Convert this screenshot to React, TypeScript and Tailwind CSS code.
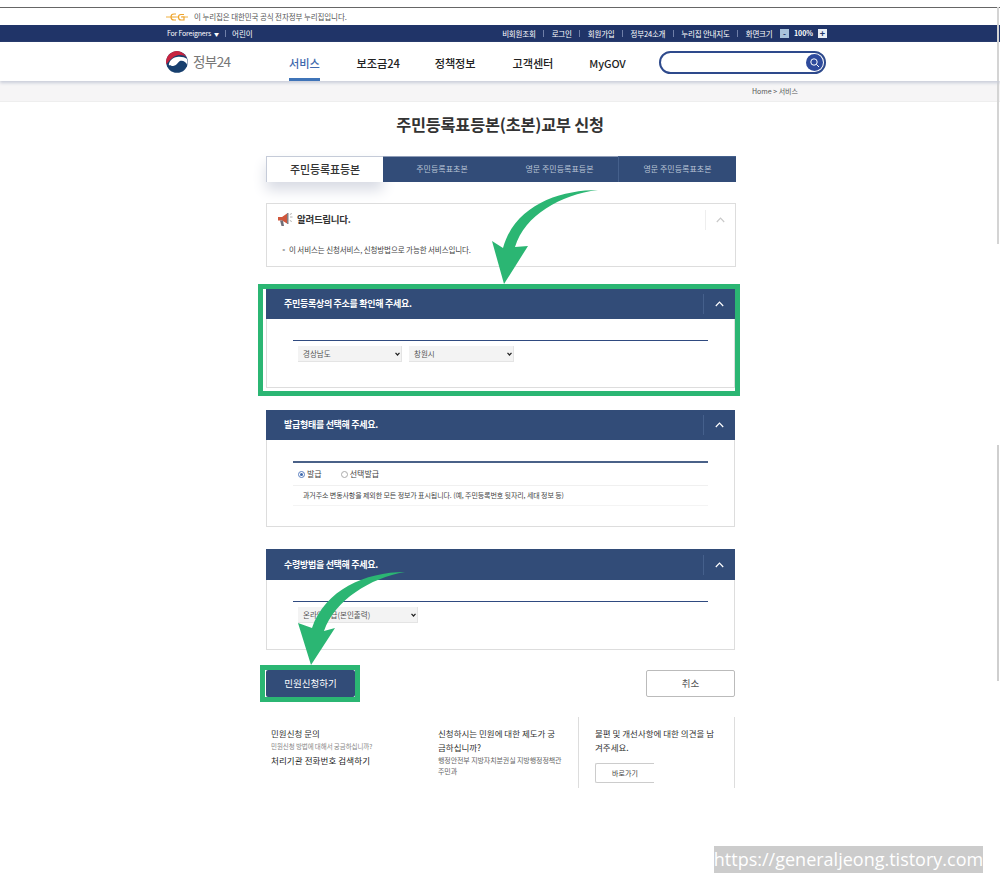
import React from "react";

const font = { fontFamily: '"Noto Sans CJK KR", "Noto Sans", sans-serif' };

function Chevron({ color }: { color: string }) {
  return (
    <svg width="9" height="6" viewBox="0 0 9 6" fill="none">
      <path d="M0.8 5 L4.5 1.2 L8.2 5" stroke={color} strokeWidth="1.2" />
    </svg>
  );
}

function Section({
  title,
  headClass,
  bodyClass,
  children,
}: {
  title: string;
  headClass: string;
  bodyClass: string;
  children: React.ReactNode;
}) {
  return (
    <section className="w-[469px] border-x border-b border-[#dddddd]">
      <div className={headClass}>
        <h2 className="text-[9px] font-bold tracking-[-0.3px] text-white">{title}</h2>
        <div className="flex h-[20px] w-[32px] items-center justify-center border-l border-[#45608c]">
          <Chevron color="#ffffff" />
        </div>
      </div>
      <div className={bodyClass}>{children}</div>
    </section>
  );
}

function NativeSelect({ width, label }: { width: string; label: string }) {
  return (
    <div className={`relative h-[16px] ${width}`}>
      <select className="block h-[16px] w-full appearance-none border-b border-r border-[#e4e4e4] bg-[#f3f3f3] pl-[5px] text-[7.5px] text-[#555555]">
        <option>{label}</option>
      </select>
      <svg className="absolute right-[2px] top-[6px]" width="5" height="4" viewBox="0 0 5 4" fill="none">
        <path d="M0.5 0.8 L2.5 3 L4.5 0.8" stroke="#222222" strokeWidth="1.2" />
      </svg>
    </div>
  );
}

function TopLink({ children }: { children: React.ReactNode }) {
  return <span className="text-[7.5px] tracking-[-0.2px] text-white">{children}</span>;
}

const Sep = () => <span className="h-[7px] w-px bg-[#6f7fa8]" />;

export default function App() {
  return (
    <div style={font} className="relative h-[890px] w-[1000px] overflow-hidden bg-white text-[#333333]">
      <div className="h-[7px]" />
      {/* gov banner */}
      <div className="h-[18px] border-t border-[#666666]">
        <div className="ml-[166px] flex h-[17px] items-center gap-[5px]">
          <svg width="23" height="8" viewBox="0 0 23 8" fill="none">
            <path d="M0 4 H22" stroke="#f0b040" strokeWidth="1" />
            <path d="M10 1 H8 Q5 1 5 4 Q5 7 8 7 H10" stroke="#eea42c" strokeWidth="1.2" fill="#ffffff" />
            <path d="M18 1.5 H15 Q12.5 1.5 12.5 4 Q12.5 7 15 7 H18 V4 H15" stroke="#eea42c" strokeWidth="1.2" fill="#ffffff" />
            <path d="M5 4 H10" stroke="#eea42c" strokeWidth="1" />
          </svg>
          <span className="text-[7.5px] tracking-[-0.1px] text-[#555555]">이 누리집은 대한민국 공식 전자정부 누리집입니다.</span>
        </div>
      </div>
      {/* utility bar */}
      <div className="flex h-[17px] items-center bg-[#203468] pl-[167px] pr-[173px]">
        <span className="text-[7px] tracking-[-0.2px] text-white">For Foreigners</span>
        <span className="ml-[3px] text-[5px] text-white">▼</span>
        <span className="ml-[6px] h-[7px] w-px bg-[#6f7fa8]" />
        <span className="ml-[6px] text-[7.5px] text-white">어린이</span>
        <div className="ml-auto flex items-center gap-[7.5px]">
          <TopLink>비회원조회</TopLink>
          <Sep />
          <TopLink>로그인</TopLink>
          <Sep />
          <TopLink>회원가입</TopLink>
          <Sep />
          <TopLink>정부24소개</TopLink>
          <Sep />
          <TopLink>누리집 안내지도</TopLink>
          <Sep />
          <TopLink>화면크기</TopLink>
          <div className="flex items-center">
            <span className="flex h-[9px] w-[9px] items-center justify-center bg-[#a9c3dc] text-[8px] font-bold leading-none text-[#203468]">-</span>
            <span className="w-[29px] text-center text-[7px] font-bold text-white">100%</span>
            <span className="flex h-[9px] w-[9px] items-center justify-center bg-[#e8edf4] text-[9px] font-bold leading-none text-[#203468]">+</span>
          </div>
        </div>
      </div>
      {/* main nav */}
      <div className="relative z-10 flex h-[39px] items-center pl-[166px] shadow-[0_2px_3px_#c9cdd9]">
        <div className="flex w-[123px] items-center gap-[5px]">
          <svg width="22" height="22" viewBox="0 0 22 22">
            <circle cx="11" cy="11" r="10.8" fill="#173f6e" />
            <path d="M0.4 13.5 A10.8 10.8 0 0 1 20.6 6.2 C17.5 3.4 12 3 8 5.8 C4.6 8 2.6 10.5 0.4 13.5 Z" fill="#c8233f" />
            <path d="M2.8 13.8 C3.4 9.4 7 6.6 11 6 C15 5.4 19 6.4 20.8 7.8 C21.6 10 21.7 12 21.2 14 C20.2 10.4 16 8.8 13.5 10.2 C11.5 11.5 11 14 8 14.8 C6 15.2 4 15 2.8 13.8 Z" fill="#ffffff" />
          </svg>
          <span className="text-[13.5px] tracking-[-0.6px] text-[#777777]">정부24</span>
        </div>
        <div className="relative flex h-full items-center">
          <span className="mt-[4px] text-[11.2px] font-medium tracking-[-0.1px] text-[#3f69ad]">서비스</span>
          <span className="absolute bottom-0 left-0 h-[3px] w-[31px] bg-[#3f74b8]" />
        </div>
        <span className="ml-[37px] mt-[4px] text-[11.2px] font-medium tracking-[-0.1px] text-[#222222]">보조금24</span>
        <span className="ml-[35px] mt-[4px] text-[11.2px] font-medium tracking-[-0.1px] text-[#222222]">정책정보</span>
        <span className="ml-[37px] mt-[4px] text-[11.2px] font-medium tracking-[-0.1px] text-[#222222]">고객센터</span>
        <span className="ml-[36px] mt-[4px] text-[10.8px] font-medium tracking-[-0.1px] text-[#222222]">MyGOV</span>
        <div className="ml-[33px] mt-[2px] flex h-[23px] w-[167px] items-center justify-end rounded-full border-2 border-[#2e4a8c] pr-[1px]">
          <span className="flex h-[17px] w-[17px] items-center justify-center rounded-full bg-[#2e4a9c]">
            <svg width="11" height="11" viewBox="0 0 11 11" fill="none">
              <circle cx="5" cy="5" r="3.2" stroke="#ffffff" strokeWidth="1" />
              <path d="M7.4 7.4 L10 10" stroke="#ffffff" strokeWidth="1" />
            </svg>
          </span>
        </div>
      </div>
      {/* breadcrumb */}
      <div className="flex h-[21px] items-center justify-end border-b border-[#eeeeee] bg-[#f6f5f6] pr-[202px]">
        <span className="text-[7px] text-[#555555]">Home &gt; 서비스</span>
      </div>

      <h1 className="mt-[10px] text-center text-[16.3px] font-bold leading-[24px] tracking-[-0.2px] text-[#333333]">
        주민등록표등본(초본)교부 신청
      </h1>

      <div className="ml-[266px] mt-[20px] w-[470px]">
        {/* tabs */}
        <div className="flex h-[26px]">
          <div className="flex w-[117px] items-center justify-center border-l border-t border-[#c5cbd8] bg-white pb-[1px] text-[11px] font-medium tracking-[-0.1px] text-[#333333] shadow-[0_8px_14px_#d8dbe4]">
            주민등록표등본
          </div>
          <div className="relative flex w-[118px] items-center justify-center border-t border-[#8f9db8] bg-[#324c78] pb-[1px] text-[8px] text-[#b9c4d6]">주민등록표초본</div>
          <div className="relative flex w-[117px] items-center justify-center border-t border-[#8f9db8] bg-[#324c78] pb-[1px] text-[8px] text-[#b9c4d6]">영문 주민등록표등본</div>
          <div className="relative flex w-[118px] items-center justify-center border-l border-t border-[#45608c] bg-[#324c78] pb-[1px] text-[8px] text-[#b9c4d6]">영문 주민등록표초본</div>
        </div>

        {/* notice */}
        <div className="mt-[21px] h-[64px] border border-[#dddddd]">
          <div className="flex h-[31px] items-center justify-between pl-[10px]">
            <div className="flex items-center gap-[4px]">
              <svg width="16" height="15" viewBox="0 0 16 15">
                <path d="M1 5 H5 L10 1.5 V11.5 L5 8.5 H1 Z" fill="#d0573c" />
                <path d="M3 8.5 H6 L7 14 H4.5 Z" fill="#6e6e78" />
                <path d="M10 1 H11.5 V12 H10 Z" fill="#808088" />
                <path d="M13 5 H15.5 M12.8 2.5 L14.8 1.5 M12.8 8.5 L14.8 9.5" stroke="#999999" strokeWidth="0.8" />
              </svg>
              <span className="text-[9.5px] font-bold tracking-[-0.3px] text-[#333333]">알려드립니다.</span>
            </div>
            <div className="flex h-[20px] w-[30px] items-center justify-center border-l border-[#eeeeee]">
              <Chevron color="#c9c9c9" />
            </div>
          </div>
          <p className="ml-[13px] mt-[9px] text-[7.5px] tracking-[-0.1px] text-[#444444]">
            <span className="text-[#aaaaaa]">▪</span> 이 서비스는 신청서비스, 신청방법으로 가능한 서비스입니다.
          </p>
        </div>

        {/* address */}
        <div className="mt-[22px]">
          <Section
            title="주민등록상의 주소를 확인해 주세요."
            headClass="-mx-px flex h-[30px] items-center justify-between bg-[#324c78] pl-[18px]"
            bodyClass="h-[68px] px-[26px] pt-[21px]"
          >
            <div className="border-t border-[#2f4a80] pl-[5px] pt-[5px]">
              <div className="flex gap-[7px]">
                <NativeSelect width="w-[104px]" label="경상남도" />
                <NativeSelect width="w-[105px]" label="창원시" />
              </div>
            </div>
          </Section>
        </div>

        {/* form */}
        <div className="mt-[22px]">
          <Section
            title="발급형태를 선택해 주세요."
            headClass="-mx-px flex h-[30px] items-center justify-between bg-[#324c78] pl-[18px]"
            bodyClass="h-[86px] px-[26px] pt-[21px]"
          >
            <div className="border-t-2 border-[#4a6188]">
              <div className="flex h-[23px] items-center border-b border-[#f0f0f0] pl-[5px] text-[8px] text-[#444444]">
                <span className="flex h-[7px] w-[7px] items-center justify-center rounded-full border border-[#5a7fc0]">
                  <span className="h-[3px] w-[3px] rounded-full bg-[#3f69ad]" />
                </span>
                <span className="ml-[2px]">발급</span>
                <span className="ml-[19px] h-[7px] w-[7px] rounded-full border border-[#aaaaaa]" />
                <span className="ml-[2px]">선택발급</span>
              </div>
              <p className="flex h-[20px] items-center border-b border-[#f4f4f4] pl-[10px] text-[7px] tracking-[-0.1px] text-[#444444]">
                과거주소 변동사항을 제외한 모든 정보가 표시됩니다. (예, 주민등록번호 뒷자리, 세대 정보 등)
              </p>
            </div>
          </Section>
        </div>

        {/* receive */}
        <div className="mt-[22px]">
          <Section
            title="수령방법을 선택해 주세요."
            headClass="-mx-px flex h-[31px] items-center justify-between bg-[#324c78] pl-[18px]"
            bodyClass="h-[69px] px-[26px] pt-[21px]"
          >
            <div className="border-t border-[#2f4a80] pl-[5px] pt-[5px]">
              <NativeSelect width="w-[120px]" label="온라인발급(본인출력)" />
            </div>
          </Section>
        </div>

        {/* buttons */}
        <div className="mt-[20px] flex w-[469px] justify-between">
          <button className="h-[27px] w-[89px] rounded-[2px] bg-[#324c78] text-[9.5px] text-white">민원신청하기</button>
          <button className="h-[27px] w-[89px] rounded-[2px] border border-[#bbbbbb] bg-white text-[9.5px] text-[#555555]">취소</button>
        </div>

        {/* info */}
        <div className="mt-[20px] flex h-[71px] w-[469px]">
          <div className="w-[172px] pl-[5px] pt-[9px]">
            <p className="text-[8.5px] leading-[14px] text-[#333333]">민원신청 문의</p>
            <p className="text-[6.5px] leading-[13px] tracking-[-0.1px] text-[#888888]">민원신청 방법에 대해서 궁금하십니까?</p>
            <p className="text-[8.5px] leading-[14px] tracking-[0.1px] text-[#222222]">처리기관 전화번호 검색하기</p>
          </div>
          <div className="w-[140px] pr-[14px] pt-[9px]">
            <p className="w-[122px] break-all text-[8.5px] leading-[14px] text-[#333333]">신청하시는 민원에 대한 제도가 궁금하십니까?</p>
            <p className="mt-[1px] text-[7px] leading-[11px] tracking-[-0.1px] text-[#666666]">행정안전부 지방자치분권실 지방행정정책관 주민과</p>
          </div>
          <div className="w-[157px] border-x border-[#dddddd] pl-[16px] pt-[9px]">
            <p className="w-[124px] break-all text-[8.5px] leading-[14px] text-[#333333]">불편 및 개선사항에 대한 의견을 남겨주세요.</p>
            <button className="mt-[9px] h-[20px] w-[59px] rounded-l-[2px] border-y border-l border-[#cccccc] text-[7px] text-[#444444]">바로가기</button>
          </div>
        </div>
      </div>

      {/* annotations laid over the page */}
      <div className="absolute left-[258px] top-[284px] h-[112px] w-[482px] border-[5px] border-[#2bb673]" />
      <div className="absolute left-[260px] top-[665px] h-[37px] w-[100px] border-[5px] border-[#2bb673]" />
      <svg className="absolute left-0 top-0" width="1000" height="890" viewBox="0 0 1000 890">
        <path d="M598 190 C560 190 515 205 503 248 L492 241 L504 284 L528 246 L515 247 C525 215 560 195 598 190 Z" fill="#2bb673" />
        <path d="M405 572 C365 572 325 590 312 628 L298 623 L311 665 L335 628 L324 631 C335 600 370 578 405 572 Z" fill="#2bb673" />
      </svg>

      {/* scrollbar traces */}
      <div className="absolute left-[997px] top-[7px] h-[237px] w-[2px] bg-[#d4d4d4]" />
      <div className="absolute left-[997px] top-[445px] h-[236px] w-[2px] bg-[#cfcfcf]" />

      {/* watermark */}
      <div
        style={{ fontFamily: '"Open Sans", sans-serif' }}
        className="absolute left-[714px] top-[846px] flex h-[27px] w-[269px] items-center justify-center bg-[#cccccc] text-[18px] text-white"
      >
        https://generaljeong.tistory.com
      </div>
    </div>
  );
}
